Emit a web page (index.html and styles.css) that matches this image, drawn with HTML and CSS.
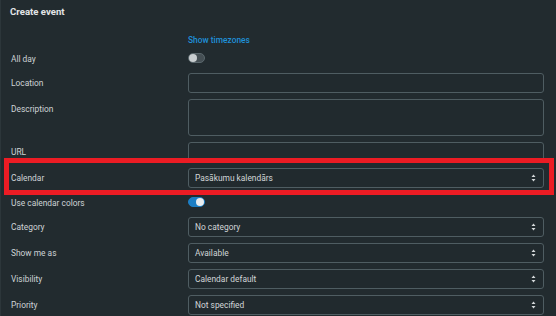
FILE: index.html
```html
<!DOCTYPE html>
<html lang="en">
<head>
    <meta charset="UTF-8">
    <meta name="viewport" content="width=device-width, initial-scale=1.0">
    <title>Create event</title>
    <link rel="stylesheet" href="styles.css">
</head>
<body>
    <div class="panel">
        <h2 class="title">Create event</h2>

        <div class="row row-link">
            <span></span>
            <a href="#" class="link">Show timezones</a>
        </div>

        <div class="row row-toggle">
            <label>All day</label>
            <div><span class="toggle"></span></div>
        </div>

        <div class="row">
            <label>Location</label>
            <div class="field"></div>
        </div>

        <div class="row">
            <label>Description</label>
            <div class="field textarea"></div>
        </div>

        <div class="row">
            <label>URL</label>
            <div class="field"></div>
        </div>

        <div class="row marked">
            <label>Calendar</label>
            <div class="field select">
                <span>Pasākumu kalendārs</span>
                <svg class="caret" width="5" height="8" viewBox="0 0 5 8"><path d="M2.5 0.5 L4.5 3 H0.5 Z M2.5 7.5 L4.5 5 H0.5 Z" fill="#d4d8da"/></svg>
            </div>
        </div>

        <div class="row row-toggle">
            <label>Use calendar colors</label>
            <div><span class="toggle on"></span></div>
        </div>

        <div class="row">
            <label>Category</label>
            <div class="field select">
                <span>No category</span>
                <svg class="caret" width="5" height="8" viewBox="0 0 5 8"><path d="M2.5 0.5 L4.5 3 H0.5 Z M2.5 7.5 L4.5 5 H0.5 Z" fill="#d4d8da"/></svg>
            </div>
        </div>

        <div class="row">
            <label>Show me as</label>
            <div class="field select">
                <span>Available</span>
                <svg class="caret" width="5" height="8" viewBox="0 0 5 8"><path d="M2.5 0.5 L4.5 3 H0.5 Z M2.5 7.5 L4.5 5 H0.5 Z" fill="#d4d8da"/></svg>
            </div>
        </div>

        <div class="row">
            <label>Visibility</label>
            <div class="field select">
                <span>Calendar default</span>
                <svg class="caret" width="5" height="8" viewBox="0 0 5 8"><path d="M2.5 0.5 L4.5 3 H0.5 Z M2.5 7.5 L4.5 5 H0.5 Z" fill="#d4d8da"/></svg>
            </div>
        </div>

        <div class="row">
            <label>Priority</label>
            <div class="field select">
                <span>Not specified</span>
                <svg class="caret" width="5" height="8" viewBox="0 0 5 8"><path d="M2.5 0.5 L4.5 3 H0.5 Z M2.5 7.5 L4.5 5 H0.5 Z" fill="#d4d8da"/></svg>
            </div>
        </div>
    </div>
</body>
</html>
```

FILE: styles.css
```css
html, body {
    margin: 0;
    height: 100%;
    overflow: hidden;
    background-color: #222b2f;
}
body {
    font-family: Roboto, "Liberation Sans", sans-serif;
    color: #ced3d6;
}
.panel {
    height: 100%;
    padding-left: 10px;
    border-left: 1px solid #2c363a;
    box-sizing: border-box;
}
.title {
    margin: 0 0 13px -1px;
    padding-top: 5px;
    font-size: 9.6px;
    line-height: 14px;
    font-weight: bold;
    color: #e2e5e7;
}
.row {
    display: grid;
    grid-template-columns: 177px 356px;
    margin-bottom: 6px;
}
.row label {
    padding-top: 4px;
    font-size: 8.4px;
    line-height: 13px;
}
.row-link {
    margin-bottom: 3px;
    padding-top: 1px;
}
.link {
    font-size: 8.4px;
    line-height: 14px;
    font-weight: 500;
    color: #1f8fd8;
    text-decoration: none;
}
.row-toggle {
    height: 17px;
}
.row-toggle label {
    padding-top: 3px;
}
.toggle {
    display: block;
    position: relative;
    width: 17px;
    height: 10px;
    margin-top: 3px;
    border-radius: 5px;
    background-color: #454f54;
    box-sizing: border-box;
    border: 1px solid #5b686d;
}
.toggle::after {
    content: "";
    position: absolute;
    top: 0;
    left: 0;
    width: 8px;
    height: 8px;
    border-radius: 50%;
    background-color: #c9ced0;
}
.toggle.on {
    background-color: #1c7ec4;
    border-color: #1c7ec4;
}
.toggle.on::after {
    left: 7px;
    background-color: #e9ecee;
}
.field {
    height: 20px;
    border: 1px solid #4f5d62;
    border-radius: 3px;
    box-sizing: border-box;
    background-color: #212a2e;
}
.textarea {
    height: 37px;
}
.select {
    display: flex;
    align-items: center;
    justify-content: space-between;
    padding: 0 7px 0 6px;
    font-size: 8.4px;
    color: #d2d6d8;
}
.caret {
    display: block;
}
.marked {
    position: relative;
}
.marked::after {
    content: "";
    position: absolute;
    top: -10px;
    left: -7px;
    width: 550px;
    height: 37px;
    border: 5px solid #ec1c24;
    box-sizing: border-box;
    pointer-events: none;
}
```
